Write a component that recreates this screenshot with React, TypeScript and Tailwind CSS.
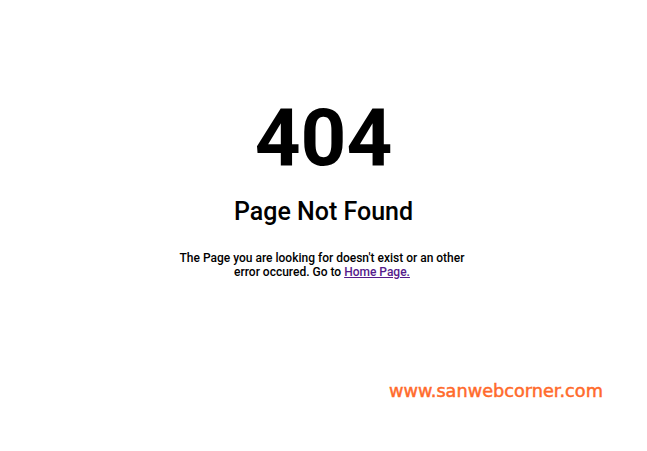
export default function App() {
  return (
    <div className="w-[647px] h-[451px] bg-white relative" style={{ fontFamily: "Roboto, sans-serif" }}>
      <div className="flex flex-col items-center pt-[96px]">
        <h1 className="text-[80px] leading-[84px] font-bold text-black">404</h1>
        <h2 className="text-[25px] leading-[30px] font-medium text-black mt-[17px]">Page Not Found</h2>
        <p className="text-[12px] leading-[14px] font-medium text-black text-center w-[300px] mt-[24px] -ml-[3px]">
          The Page you are looking for doesn't exist or an other error occured. Go to{" "}
          <a href="#" className="underline text-[#551a8b]">Home Page.</a>
        </p>
      </div>
      <div
        className="absolute left-[389px] top-[380px] text-[17.7px] leading-[22px] font-normal text-[#ff6a2b]"
        style={{ fontFamily: "'DejaVu Sans', sans-serif", WebkitTextStroke: "0.5px #ff6a2b" }}
      >
        www.sanwebcorner.com
      </div>
    </div>
  );
}
